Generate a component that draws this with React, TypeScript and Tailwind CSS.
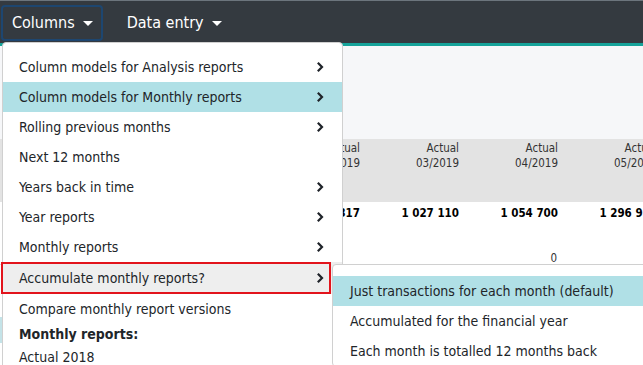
import React from "react";

const Chevron = () => (
  <svg width="7" height="10" viewBox="0 0 7 10" className="shrink-0">
    <path d="M1.6 1.6 L5 5 L1.6 8.4" fill="none" stroke="#1f2329" strokeWidth="2.2" strokeLinecap="square" />
  </svg>
);

const Caret = () => (
  <span className="inline-block w-0 h-0 border-l-[5px] border-r-[5px] border-t-[5px] border-l-transparent border-r-transparent border-t-white" />
);

const menuItems: { label: string; sub: boolean; cls?: string }[] = [
  { label: "Column models for Analysis reports", sub: true },
  { label: "Column models for Monthly reports", sub: true, cls: "bg-[#b0e0e6]" },
  { label: "Rolling previous months", sub: true },
  { label: "Next 12 months", sub: false },
  { label: "Years back in time", sub: true },
  { label: "Year reports", sub: true },
  { label: "Monthly reports", sub: true },
];

const cols = [
  { h: "02/2019", v: "1 012 317", z: "" },
  { h: "03/2019", v: "1 027 110", z: "" },
  { h: "04/2019", v: "1 054 700", z: "0" },
  { h: "05/2019", v: "1 296 912", z: "" },
];

export default function App() {
  return (
    <div className="w-[643px] h-[365px] overflow-hidden relative bg-white font-['DejaVu_Sans_Condensed','DejaVu_Sans',sans-serif] text-[#212529]">
      <nav className="h-[43px] bg-[#343a40] border-t border-[#6c757d] flex items-start pt-[4px] pl-[1px]">
        <button className="h-[36px] border-2 border-[#1d4670] rounded-[4px] pl-[9px] pr-[8px] text-white text-[16px] flex items-center gap-[8px]">
          <span>Columns</span>
          <Caret />
        </button>
        <div className="h-[36px] ml-[24px] text-white text-[16px] flex items-center gap-[8px]">
          <span>Data entry</span>
          <Caret />
        </div>
      </nav>
      <div className="h-[3px] bg-[#15a39a]" />
      <div className="h-[93px] bg-[#f6f7f9]" />
      <div className="flex h-[63px] bg-[#e3e3e3] text-[11.5px] leading-[15px] text-[#333] pt-[2px]">
        <div className="w-[261px] shrink-0" />
        {cols.map((c) => (
          <div key={c.h} className="w-[99px] shrink-0 text-right">
            <div>Actual</div>
            <div>{c.h}</div>
          </div>
        ))}
      </div>
      <div className="flex h-[28px] items-center text-[11.5px] font-bold text-black pb-[4px]">
        <div className="w-[261px] shrink-0" />
        {cols.map((c) => (
          <div key={c.h} className="w-[99px] shrink-0 text-right whitespace-nowrap">{c.v}</div>
        ))}
      </div>
      <div className="flex h-[35px] items-end text-[11.5px] leading-[12px] border-b border-[#dcdcdc] text-[#333]">
        <div className="w-[261px] shrink-0" />
        {cols.map((c) => (
          <div key={c.h} className="w-[99px] shrink-0 text-right pr-[1px]">{c.z}</div>
        ))}
      </div>
      <div className="h-[52px]" />
      <div className="h-[26px] bg-[#c4e3e8]" />

      <div className="absolute left-[2px] top-[42px] w-[341px] bg-white border border-[#d0d0d0] rounded-[4px] pt-[9px] z-10 text-[14px]">
        {menuItems.map((m) => (
          <div key={m.label} className={`h-[30px] flex items-center justify-between pl-[16px] pr-[18px] ${m.cls ?? ""}`}>
            <span>{m.label}</span>
            {m.sub && <Chevron />}
          </div>
        ))}
        <div className="h-[32px] flex items-center justify-between pl-[16px] pr-[18px] bg-[#eeeeee] relative">
          <span>Accumulate monthly reports?</span>
          <Chevron />
          <div className="absolute left-[-2px] top-0 w-[330px] h-[32px] border-2 border-[#e2141c]" />
        </div>
        <div className="h-[30px] flex items-center pl-[16px]">Compare monthly report versions</div>
        <div className="h-[20px] flex items-center pl-[16px] font-bold">Monthly reports:</div>
        <div className="h-[26px] flex items-center pl-[16px]">Actual 2018</div>
      </div>

      <div className="absolute left-[332px] top-[264px] w-[330px] bg-white border border-[#d0d0d0] rounded-[4px] pt-[11px] z-20 text-[14px]">
        <div className="h-[30px] flex items-center pl-[17px] bg-[#b0e0e6]">Just transactions for each month (default)</div>
        <div className="h-[30px] flex items-center pl-[17px]">Accumulated for the financial year</div>
        <div className="h-[30px] flex items-center pl-[17px]">Each month is totalled 12 months back</div>
      </div>
    </div>
  );
}
